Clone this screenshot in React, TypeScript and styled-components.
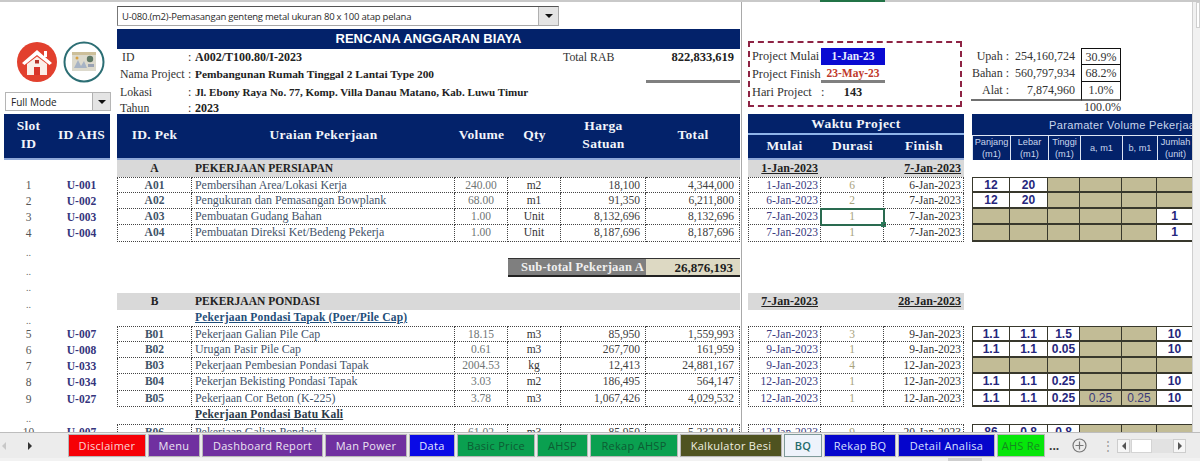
import React from "react";
import styled, { createGlobalStyle } from "styled-components";

const SERIF = `"Liberation Serif", "Times New Roman", serif`;
const SANS = `"Liberation Sans", Arial, sans-serif`;
const UI = `"Open Sans", "Noto Sans", sans-serif`;
const NAVY = "#03226a";

type Param = { v: string; khaki: boolean };
const k = (v = ""): Param => ({ v, khaki: true });
const w = (v: string): Param => ({ v, khaki: false });

type Work = {
    slot: string;
    ahs: string;
    pek: string;
    name: string;
    vol: string;
    qty: string;
    price: string;
    total: string;
    start: string;
    days: string;
    end: string;
    params: Param[];
    selected?: boolean;
};

const persiapan: Work[] = [
    { slot: "1", ahs: "U-001", pek: "A01", name: "Pembersihan Area/Lokasi Kerja", vol: "240.00", qty: "m2", price: "18,100", total: "4,344,000", start: "1-Jan-2023", days: "6", end: "6-Jan-2023", params: [w("12"), w("20"), k(), k(), k(), k()] },
    { slot: "2", ahs: "U-002", pek: "A02", name: "Pengukuran dan Pemasangan Bowplank", vol: "68.00", qty: "m1", price: "91,350", total: "6,211,800", start: "6-Jan-2023", days: "2", end: "7-Jan-2023", params: [w("12"), w("20"), k(), k(), k(), k()] },
    { slot: "3", ahs: "U-003", pek: "A03", name: "Pembuatan Gudang Bahan", vol: "1.00", qty: "Unit", price: "8,132,696", total: "8,132,696", start: "7-Jan-2023", days: "1", end: "7-Jan-2023", params: [k(), k(), k(), k(), k(), w("1")], selected: true },
    { slot: "4", ahs: "U-004", pek: "A04", name: "Pembuatan Direksi Ket/Bedeng Pekerja", vol: "1.00", qty: "Unit", price: "8,187,696", total: "8,187,696", start: "7-Jan-2023", days: "1", end: "7-Jan-2023", params: [k(), k(), k(), k(), k(), w("1")] },
];

const tapak: Work[] = [
    { slot: "5", ahs: "U-007", pek: "B01", name: "Pekerjaan Galian Pile Cap", vol: "18.15", qty: "m3", price: "85,950", total: "1,559,993", start: "7-Jan-2023", days: "3", end: "9-Jan-2023", params: [w("1.1"), w("1.1"), w("1.5"), k(), k(), w("10")] },
    { slot: "6", ahs: "U-008", pek: "B02", name: "Urugan Pasir Pile Cap", vol: "0.61", qty: "m3", price: "267,700", total: "161,959", start: "9-Jan-2023", days: "1", end: "9-Jan-2023", params: [w("1.1"), w("1.1"), w("0.05"), k(), k(), w("10")] },
    { slot: "7", ahs: "U-033", pek: "B03", name: "Pekerjaan Pembesian Pondasi Tapak", vol: "2004.53", qty: "kg", price: "12,413", total: "24,881,167", start: "9-Jan-2023", days: "4", end: "12-Jan-2023", params: [k(), k(), k(), k(), k(), k()] },
    { slot: "8", ahs: "U-034", pek: "B04", name: "Pekerjan Bekisting Pondasi Tapak", vol: "3.03", qty: "m2", price: "186,495", total: "564,147", start: "12-Jan-2023", days: "1", end: "12-Jan-2023", params: [w("1.1"), w("1.1"), w("0.25"), k(), k(), w("10")] },
    { slot: "9", ahs: "U-027", pek: "B05", name: "Pekerjaan Cor Beton (K-225)", vol: "3.78", qty: "m3", price: "1,067,426", total: "4,029,532", start: "12-Jan-2023", days: "1", end: "12-Jan-2023", params: [w("1.1"), w("1.1"), w("0.25"), k("0.25"), k("0.25"), w("10")] },
];

const batuKali: Work[] = [
    { slot: "10", ahs: "U-007", pek: "B06", name: "Pekerjaan Galian Pondasi", vol: "61.02", qty: "m3", price: "85,950", total: "5,232,924", start: "12-Jan-2023", days: "9", end: "20-Jan-2023", params: [w("86"), w("0.8"), w("0.8"), k(), k(), k()] },
];

const tabs = [
    { label: "Disclaimer", width: 76, bg: "#f60006", fg: "#fbd5d5" },
    { label: "Menu", width: 50, bg: "#7030a0", fg: "#ece4f2" },
    { label: "Dashboard Report", width: 119, bg: "#7030a0", fg: "#ece4f2" },
    { label: "Man Power", width: 80, bg: "#7030a0", fg: "#ece4f2" },
    { label: "Data", width: 44, bg: "#0a0ae6", fg: "#e4e8ff" },
    { label: "Basic Price", width: 76, bg: "#0aa050", fg: "#0d5c33" },
    { label: "AHSP", width: 49, bg: "#0aa050", fg: "#0d5c33" },
    { label: "Rekap AHSP", width: 86, bg: "#0aa050", fg: "#0d5c33" },
    { label: "Kalkulator Besi", width: 100, bg: "#4f5320", fg: "#f0f0e0" },
    { label: "BQ", width: 36, bg: "#eef3fb", fg: "#1d6b6b", active: true },
    { label: "Rekap BQ", width: 70, bg: "#0505cc", fg: "#d8e0ff" },
    { label: "Detail Analisa", width: 95, bg: "#0505cc", fg: "#d8e0ff" },
    { label: "AHS Re", width: 46, bg: "#06e60a", fg: "#148a20" },
];

const App = () => {
    const renderWork = (row: Work, index: number) => (
        <Row key={row.pek} $h={index === 3 ? 17 : 16}>
            <SlotCell>{row.slot}</SlotCell>
            <AhsCell>{row.ahs}</AhsCell>
            <span />
            <DotCell $first $top={index === 0} $align="center" $color="#3f5468" $bold>
                {row.pek}
            </DotCell>
            <NameCell $top={index === 0} $align="left" $color="#44546a">
                {row.name}
            </NameCell>
            <DotCell $top={index === 0} $align="center" $color="#6f7575">
                {row.vol}
            </DotCell>
            <DotCell $top={index === 0} $align="center" $color="#333">
                {row.qty}
            </DotCell>
            <DotCell $top={index === 0} $align="right" $color="#404040">
                {row.price}
            </DotCell>
            <DotCell $top={index === 0} $align="right" $color="#404040">
                {row.total}
            </DotCell>
            <span />
            <DotCell $first $top={index === 0} $align="right" $color="#3b3b80" $tight>
                {row.start}
            </DotCell>
            <DotCell $top={index === 0} $align="center" $color="#a8a27c" $selected={row.selected}>
                {row.days}
            </DotCell>
            <DotCell $top={index === 0} $align="right" $color="#333" $tight>
                {row.end}
            </DotCell>
            <span />
            {row.params.map((p, i) => (
                <ParamCell key={i} $khaki={p.khaki} $first={i === 0} $top={index === 0}>
                    {p.v}
                </ParamCell>
            ))}
        </Row>
    );

    return (
        <Page>
            <GlobalStyle />
            <ColumnStrip>
                <ActiveColumn />
            </ColumnStrip>
            <Workspace>
                <Sheet>
                    <FreezeLine />
                    <TopArea>
                        <LeftTools>
                            <IconRow>
                                <svg width="42" height="40" viewBox="0 0 42 40">
                                    <circle cx="21" cy="20" r="20" fill="#e2402e" />
                                    <path d="M6 21 L21 8 L36 21 L33.5 23 L21 13 L8.5 23 Z" fill="#fff" />
                                    <rect x="28" y="9" width="3" height="6" fill="#fff" />
                                    <path d="M11 22 L21 14.5 L31 22 V33 H11 Z" fill="#fbeee8" />
                                    <rect x="18" y="25" width="6" height="8" fill="#d9352a" />
                                    <rect x="19" y="18" width="4" height="3.5" fill="#b5332a" />
                                </svg>
                                <svg width="42" height="42" viewBox="0 0 42 42">
                                    <circle cx="21" cy="21" r="19.5" fill="#fff" stroke="#2c6e74" strokeWidth="2" />
                                    <rect x="9" y="11" width="24" height="19" fill="#dcd9cc" />
                                    <rect x="9" y="11" width="24" height="3" fill="#cdbf9a" />
                                    <path d="M11 27 L15 19 L18 25 L21 20 L24 27 Z" fill="#a7b3c4" />
                                    <circle cx="27" cy="18" r="3.2" fill="#5d7764" />
                                    <circle cx="14" cy="17" r="1.5" fill="#d8a040" />
                                    <rect x="25" y="23" width="6" height="3" fill="#9aa2b3" />
                                </svg>
                            </IconRow>
                            <ModeSelect>
                                <span>Full Mode</span>
                                <SelectButton $size={18}>
                                    <Caret />
                                </SelectButton>
                            </ModeSelect>
                        </LeftTools>
                        <ProjectPanel>
                            <ItemSelect>
                                <span>U-080.(m2)-Pemasangan genteng metal ukuran 80 x 100 atap pelana</span>
                                <SelectButton $size={20}>
                                    <Caret />
                                </SelectButton>
                            </ItemSelect>
                            <TitleBar>RENCANA ANGGARAN BIAYA</TitleBar>
                            <InfoRow $h={16}>
                                <InfoLabel $pad={5}>ID</InfoLabel>
                                <span>:</span>
                                <InfoValue $size={12}>A002/T100.80/I-2023</InfoValue>
                                <span>Total RAB</span>
                                <TotalValue>822,833,619</TotalValue>
                            </InfoRow>
                            <InfoRow $h={18}>
                                <InfoLabel>Nama Project</InfoLabel>
                                <span>:</span>
                                <InfoValue $size={11.4}>Pembangunan Rumah Tinggal 2 Lantai Type 200</InfoValue>
                                <span />
                                <TotalRule />
                            </InfoRow>
                            <InfoRow $h={18}>
                                <InfoLabel>Lokasi</InfoLabel>
                                <span>:</span>
                                <InfoValue $size={11.05}>Jl. Ebony Raya No. 77, Komp. Villa Danau Matano, Kab. Luwu Timur</InfoValue>
                            </InfoRow>
                            <InfoRow $h={13}>
                                <InfoLabel>Tahun</InfoLabel>
                                <span>:</span>
                                <InfoValue $size={12}>2023</InfoValue>
                            </InfoRow>
                        </ProjectPanel>
                        <ScheduleBox>
                            <span>Project Mulai :</span>
                            <StartDate>1-Jan-23</StartDate>
                            <span>Project Finish</span>
                            <FinishDate>23-May-23</FinishDate>
                            <span>Hari Project &nbsp; :</span>
                            <DayCount>143</DayCount>
                        </ScheduleBox>
                        <CostSummary>
                            <CostLabel>Upah :</CostLabel>
                            <CostValue>254,160,724</CostValue>
                            <CostPercent $first>30.9%</CostPercent>
                            <CostLabel>Bahan :</CostLabel>
                            <CostValue>560,797,934</CostValue>
                            <CostPercent>68.2%</CostPercent>
                            <CostLabel $last>Alat :</CostLabel>
                            <CostValue $last>7,874,960</CostValue>
                            <CostPercent $last>1.0%</CostPercent>
                            <CostTotal>100.0%</CostTotal>
                        </CostSummary>
                    </TopArea>

                    <HeaderRow>
                        <HeadCell $span>
                            Slot
                            <br />
                            ID
                        </HeadCell>
                        <HeadCell $span>ID AHS</HeadCell>
                        <HeadGap />
                        <HeadCell $span>ID. Pek</HeadCell>
                        <HeadCell $span>Uraian Pekerjaan</HeadCell>
                        <HeadCell $span>Volume</HeadCell>
                        <HeadCell $span>Qty</HeadCell>
                        <HeadCell $span>
                            Harga
                            <br />
                            Satuan
                        </HeadCell>
                        <HeadCell $span>Total</HeadCell>
                        <HeadGap />
                        <WaktuTitle>Waktu Project</WaktuTitle>
                        <HeadGap />
                        <ParamTitle>Paramater Volume Pekerjaan</ParamTitle>
                        <HeadCell $sub>Mulai</HeadCell>
                        <HeadCell $sub>Durasi</HeadCell>
                        <HeadCell $sub>Finish</HeadCell>
                        <ParamHead $col={15}>
                            Panjang
                            <br />
                            (m1)
                        </ParamHead>
                        <ParamHead $col={16}>
                            Lebar
                            <br />
                            (m1)
                        </ParamHead>
                        <ParamHead $col={17}>
                            Tinggi
                            <br />
                            (m1)
                        </ParamHead>
                        <ParamHead $col={18}>a, m1</ParamHead>
                        <ParamHead $col={19}>b, m1</ParamHead>
                        <ParamHead $col={20}>
                            Jumlah
                            <br />
                            (unit)
                        </ParamHead>
                    </HeaderRow>

                    <Row $h={17}>
                        <SectionRowStart />
                        <SectionCell $center>A</SectionCell>
                        <SectionCell>PEKERJAAN PERSIAPAN</SectionCell>
                        <SectionFill />
                        <span />
                        <SectionDate>1-Jan-2023</SectionDate>
                        <SectionCell />
                        <SectionDate>7-Jan-2023</SectionDate>
                    </Row>
                    {persiapan.map(renderWork)}
                    <Row $h={16}>
                        <SlotDots>..</SlotDots>
                    </Row>
                    <Row $h={19}>
                        <SlotDots>..</SlotDots>
                        <SubtotalLabel>Sub-total Pekerjaan A</SubtotalLabel>
                        <SubtotalValue>26,876,193</SubtotalValue>
                    </Row>
                    <Row $h={16}>
                        <SlotDots>..</SlotDots>
                    </Row>
                    <Row $h={17}>
                        <SlotDots>..</SlotDots>
                        <span />
                        <span />
                        <SectionCell $center>B</SectionCell>
                        <SectionCell>PEKERJAAN PONDASI</SectionCell>
                        <SectionFill />
                        <span />
                        <SectionDate>7-Jan-2023</SectionDate>
                        <SectionCell />
                        <SectionDate>28-Jan-2023</SectionDate>
                    </Row>
                    <Row $h={16}>
                        <SlotDots>..</SlotDots>
                        <SubHeading>Pekerjaan Pondasi Tapak (Poer/Pile Cap)</SubHeading>
                    </Row>
                    {tapak.map(renderWork)}
                    <Row $h={17}>
                        <SlotDots>..</SlotDots>
                        <SubHeading $dark>Pekerjaan Pondasi Batu Kali</SubHeading>
                    </Row>
                    {batuKali.map(renderWork)}
                </Sheet>
                <VScroll>
                    <VThumb />
                </VScroll>
            </Workspace>
            <TabBar>
                <TabNav>
                    <Arrow $dir="left" $color="#c8c8c8" />
                    <Arrow $dir="right" $color="#333" />
                </TabNav>
                <TabList>
                    {tabs.map((t) => (
                        <Tab key={t.label} $w={t.width} $bg={t.bg} $fg={t.fg} $active={t.active}>
                            {t.label}
                        </Tab>
                    ))}
                </TabList>
                <More>...</More>
                <AddSheet>
                    <svg width="15" height="15" viewBox="0 0 15 15">
                        <circle cx="7.5" cy="7.5" r="6.5" fill="none" stroke="#777" strokeWidth="1.2" />
                        <path d="M7.5 3.5v8M3.5 7.5h8" stroke="#777" strokeWidth="1.2" />
                    </svg>
                </AddSheet>
                <Splitter>⋮</Splitter>
                <HScroll>
                    <HButton>
                        <Arrow $dir="left" $color="#555" />
                    </HButton>
                    <HThumb />
                    <HButton $end>
                        <Arrow $dir="right" $color="#555" />
                    </HButton>
                </HScroll>
            </TabBar>
            <BottomStrip>
                <BottomThumb />
            </BottomStrip>
        </Page>
    );
};

export default App;

const GlobalStyle = createGlobalStyle`
    html, body {
        margin: 0;
        padding: 0;
        background: #fff;
    }
    * {
        box-sizing: border-box;
    }
`;

const Page = styled.div`
    width: 1200px;
    height: 461px;
    display: flex;
    flex-direction: column;
    overflow: hidden;
    font-family: ${SERIF};
    font-size: 12px;
    color: #333;
    background: #fff;
`;

const ColumnStrip = styled.div`
    height: 2px;
    flex: none;
    background: #c9c9c9;
    padding-left: 820px;
`;

const ActiveColumn = styled.div`
    width: 65px;
    height: 2px;
    background: #217346;
`;

const Workspace = styled.div`
    flex: 1;
    min-height: 0;
    display: flex;
`;

const Sheet = styled.div`
    position: relative;
    width: 1193px;
    padding-left: 4px;
    overflow: hidden;
    border-right: 1px solid #cfcfcf;
`;

const FreezeLine = styled.div`
    position: absolute;
    left: 741px;
    top: 0;
    bottom: 0;
    width: 1px;
    background: #a9a9a9;
    z-index: 3;
`;

const VScroll = styled.div`
    flex: 1;
    background: #f1f1f1;
    padding: 0 0 0 3px;
`;

const VThumb = styled.div`
    width: 4px;
    height: 26px;
    background: #fff;
    border: 1px solid #cfcfcf;
`;

const TopArea = styled.div`
    display: flex;
    height: 112px;
`;

const LeftTools = styled.div`
    width: 113px;
    flex: none;
    padding: 39px 0 0 1px;
`;

const IconRow = styled.div`
    display: flex;
    align-items: center;
    gap: 5px;
    padding-left: 11px;
    height: 42px;
`;

const ModeSelect = styled.div`
    display: flex;
    align-items: center;
    justify-content: space-between;
    width: 106px;
    height: 19px;
    margin-top: 9px;
    padding-left: 5px;
    border: 1px solid #b5b5b5;
    background: #fff;
    font: 10px ${UI};
    color: #222;
`;

const SelectButton = styled.div<{ $size: number }>`
    width: ${(p) => p.$size}px;
    height: 100%;
    flex: none;
    display: flex;
    align-items: center;
    justify-content: center;
    background: #e4e4e4;
    border-left: 1px solid #b0b0b0;
`;

const Caret = styled.div`
    width: 0;
    height: 0;
    border-left: 4px solid transparent;
    border-right: 4px solid transparent;
    border-top: 4px solid #111;
`;

const ProjectPanel = styled.div`
    width: 623px;
    flex: none;
    padding-top: 4px;
`;

const ItemSelect = styled.div`
    display: flex;
    align-items: center;
    justify-content: space-between;
    width: 442px;
    height: 20px;
    padding-left: 4px;
    border: 1px solid #a8a8a8;
    border-top-color: #555;
    border-left-color: #777;
    font: 9.5px ${UI};
    letter-spacing: -0.22px;
    color: #2a2a2a;
`;

const TitleBar = styled.div`
    height: 20px;
    margin-top: 3px;
    background: ${NAVY};
    color: #fff;
    font: bold 13px/20px ${SANS};
    text-align: center;
`;

const InfoRow = styled.div<{ $h: number }>`
    display: grid;
    grid-template-columns: 71px 7px 368px 83px 94px;
    align-items: center;
    height: ${(p) => p.$h}px;
    font-size: 11.8px;
    white-space: nowrap;
    color: #333;
`;

const InfoLabel = styled.span<{ $pad?: number }>`
    padding-left: ${(p) => p.$pad ?? 3}px;
`;

const InfoValue = styled.span<{ $size: number }>`
    font-weight: bold;
    font-size: ${(p) => p.$size}px;
    color: #222;
`;

const TotalValue = styled.span`
    font-weight: bold;
    font-size: 12.5px;
    text-align: right;
    padding-right: 6px;
    color: #222;
`;

const TotalRule = styled.div`
    height: 3px;
    background: #808080;
    align-self: end;
`;

const ScheduleBox = styled.div`
    flex: none;
    width: 214px;
    height: 66px;
    margin: 39px 0 0 8px;
    padding: 5px 0 0 2px;
    border: 2px dashed #8e2344;
    display: grid;
    grid-template-columns: 69px 64px;
    grid-template-rows: 17px 18px 18px;
    align-items: center;
    white-space: nowrap;
    font-size: 12.3px;
`;

const StartDate = styled.div`
    height: 17px;
    background: #0a0ad2;
    color: #e8ecff;
    font: bold 11.5px/17px ${SERIF};
    text-align: center;
`;

const FinishDate = styled.div`
    height: 18px;
    border-bottom: 3px solid #808080;
    color: #c0392b;
    font: bold 11.5px/16px ${SERIF};
    text-align: center;
`;

const DayCount = styled.div`
    font-weight: bold;
    text-align: center;
    color: #222;
`;

const CostSummary = styled.div`
    flex: none;
    width: 150px;
    margin: 46px 0 0 9px;
    display: grid;
    grid-template-columns: 38px 66px 6px 40px;
    grid-template-rows: 17px 17px 19px 13px;
    align-items: center;
    white-space: nowrap;
`;

const CostLabel = styled.div<{ $last?: boolean }>`
    grid-column: 1;
    height: 100%;
    line-height: 17px;
    text-align: right;
    border-bottom: ${(p) => (p.$last ? "2px solid #707070" : "none")};
`;

const CostValue = styled.div<{ $last?: boolean }>`
    grid-column: 2 / 4;
    height: 100%;
    line-height: 17px;
    padding-right: 6px;
    text-align: right;
    border-bottom: ${(p) => (p.$last ? "2px solid #707070" : "none")};
`;

const CostPercent = styled.div<{ $first?: boolean; $last?: boolean }>`
    grid-column: 4;
    height: 100%;
    line-height: 16px;
    text-align: center;
    border: 1px solid #111;
    border-top-width: ${(p) => (p.$first ? 1 : 0)}px;
    border-bottom: ${(p) => (p.$last ? "2px solid #707070" : "1px solid #111")};
`;

const CostTotal = styled.div`
    grid-column: 3 / 5;
    text-align: right;
    justify-self: end;
`;

const COLUMNS = "49px 57px 7px 75px 263px 53px 53px 85px 94px 8px 73px 63px 80px 8px 38px 38px 32px 42px 35px 36px";

const HeaderRow = styled.div`
    display: grid;
    grid-template-columns: ${COLUMNS};
    grid-template-rows: 21px 23px;
    height: 46px;
`;

const HeadCell = styled.div<{ $span?: boolean; $sub?: boolean }>`
    grid-row: ${(p) => (p.$span ? "1 / 3" : "2")};
    background: ${NAVY};
    color: #f2f5fb;
    display: flex;
    align-items: center;
    justify-content: center;
    text-align: center;
    height: ${(p) => (p.$span ? "46px" : "25px")};
    padding-bottom: 2px;
    border-bottom: 2px solid #8fa8d8;
    font: bold 13.5px/18px ${SERIF};
    letter-spacing: 0.3px;
    white-space: nowrap;
`;

const HeadGap = styled.span`
    grid-row: 1 / 3;
`;

const WaktuTitle = styled.div`
    grid-column: 11 / 14;
    grid-row: 1;
    background: ${NAVY};
    color: #f2f5fb;
    font: bold 13.5px/20px ${SERIF};
    letter-spacing: 0.4px;
    text-align: center;
    border-bottom: 2px solid #8fb4e8;
`;

const ParamTitle = styled.div`
    grid-column: 15 / 21;
    grid-row: 1;
    background: ${NAVY};
    color: #c9d6ee;
    font: 11px/22px ${SANS};
    letter-spacing: 0.35px;
    padding-left: 77px;
    white-space: nowrap;
    overflow: hidden;
`;

const ParamHead = styled.div<{ $col: number }>`
    grid-column: ${(p) => p.$col};
    grid-row: 2;
    height: 25px;
    background: ${NAVY};
    color: #c9d6ee;
    border-left: 1px solid #dfe6f3;
    border-top: 1px solid #dfe6f3;
    display: flex;
    align-items: center;
    justify-content: center;
    text-align: center;
    font: 9.2px/12.5px ${SANS};
    white-space: nowrap;
    overflow: hidden;
`;

const Row = styled.div<{ $h: number }>`
    display: grid;
    grid-template-columns: ${COLUMNS};
    grid-template-rows: ${(p) => p.$h}px;
    height: ${(p) => p.$h}px;
    font-size: 11.5px;
    white-space: nowrap;
`;

const SectionRowStart = styled.span`
    grid-column: 1 / 4;
`;

const SlotCell = styled.div`
    text-align: center;
    line-height: 16px;
    color: #555;
`;

const SlotDots = styled.div`
    grid-column: 1;
    align-self: end;
    text-align: center;
    line-height: 10px;
    font-size: 10px;
    color: #666;
`;

const AhsCell = styled.div`
    text-align: center;
    line-height: 16px;
    font-weight: bold;
    color: #34347c;
`;

const DotCell = styled.div<{
    $first?: boolean;
    $top?: boolean;
    $align: string;
    $color: string;
    $bold?: boolean;
    $selected?: boolean;
    $tight?: boolean;
}>`
    position: relative;
    padding: 0 ${(p) => (p.$tight ? 2 : p.$align === "right" ? 5 : 3)}px 0 3px;
    text-align: ${(p) => p.$align};
    color: ${(p) => p.$color};
    font-weight: ${(p) => (p.$bold ? "bold" : "normal")};
    line-height: 15px;
    border-right: 1px dotted #444;
    border-bottom: 1px dotted #444;
    border-left: ${(p) => (p.$first ? "1px dotted #444" : "none")};
    border-top: ${(p) => (p.$top ? "1px dotted #444" : "none")};
    outline: ${(p) => (p.$selected ? "2px solid #2a6b50" : "none")};
    outline-offset: -1px;

    &::after {
        content: "";
        display: ${(p) => (p.$selected ? "block" : "none")};
        position: absolute;
        right: -3px;
        bottom: -3px;
        width: 5px;
        height: 5px;
        background: #2a7b5a;
    }
`;

const NameCell = styled(DotCell)`
    font-size: 11.9px;
`;

const ParamCell = styled.div<{ $khaki: boolean; $first?: boolean; $top?: boolean }>`
    background: ${(p) => (p.$khaki ? "#c2bc96" : "#fff")};
    color: ${(p) => (p.$khaki ? "#3a3a7a" : "#26267c")};
    font: ${(p) => (p.$khaki ? "normal" : "bold")} 12px/14px ${SANS};
    text-align: center;
    border-right: 1px solid #38382c;
    border-bottom: 2px solid #38382c;
    border-left: ${(p) => (p.$first ? "1px solid #38382c" : "none")};
    border-top: ${(p) => (p.$top ? "1px solid #38382c" : "none")};
`;

const SectionCell = styled.div<{ $center?: boolean }>`
    background: #d9d9d9;
    padding-left: ${(p) => (p.$center ? 0 : 3)}px;
    text-align: ${(p) => (p.$center ? "center" : "left")};
    font-weight: bold;
    line-height: 17px;
    color: #222;
`;

const SectionFill = styled(SectionCell)`
    grid-column: 6 / 10;
`;

const SectionDate = styled(SectionCell)`
    text-align: right;
    padding: 0 3px 0 0;
    font-size: 12px;
    text-decoration: underline;
    color: #222;
`;

const SubtotalLabel = styled.div`
    grid-column: 7 / 9;
    background: #7f7f7f;
    color: #f0f0f0;
    font: bold 12.5px/17px ${SERIF};
    letter-spacing: 0.2px;
    text-align: right;
    padding-right: 2px;
    border-top: 1px solid #333;
    border-bottom: 2px solid #222;
`;

const SubtotalValue = styled.div`
    grid-column: 9;
    background: #ddd9c3;
    color: #1d1d1d;
    font: bold 13px/17px ${SERIF};
    text-align: right;
    padding-right: 7px;
    border-top: 1px solid #333;
    border-bottom: 2px solid #222;
`;

const SubHeading = styled.div<{ $dark?: boolean }>`
    grid-column: 5;
    padding-left: 3px;
    font-weight: bold;
    font-size: 11.5px;
    line-height: 15px;
    letter-spacing: 0.2px;
    text-decoration: underline;
    color: ${(p) => (p.$dark ? "#2a3a48" : "#1f4e79")};
`;

const TabBar = styled.div`
    flex: none;
    height: 26px;
    display: flex;
    align-items: center;
    background: #ececec;
    border-top: 1px solid #bdbdbd;
`;

const TabNav = styled.div`
    width: 69px;
    flex: none;
    display: flex;
    align-items: center;
    gap: 22px;
    padding-left: 2px;
`;

const Arrow = styled.div<{ $dir: "left" | "right"; $color: string }>`
    width: 0;
    height: 0;
    border-top: 4px solid transparent;
    border-bottom: 4px solid transparent;
    border-left: ${(p) => (p.$dir === "right" ? `4px solid ${p.$color}` : "none")};
    border-right: ${(p) => (p.$dir === "left" ? `4px solid ${p.$color}` : "none")};
`;

const TabList = styled.div`
    display: flex;
    gap: 4px;
    width: 975px;
    flex: none;
`;

const Tab = styled.div<{ $w: number; $bg: string; $fg: string; $active?: boolean }>`
    width: ${(p) => p.$w}px;
    height: 21px;
    flex: none;
    overflow: hidden;
    white-space: nowrap;
    text-align: center;
    background: ${(p) => p.$bg};
    color: ${(p) => p.$fg};
    font: ${(p) => (p.$active ? 600 : 400)} 11px/21px ${UI};
    letter-spacing: 0.3px;
    box-shadow: 0 0 0 1px ${(p) => (p.$active ? "#7f9a9a" : "rgba(0, 0, 0, 0.22)")};
`;

const More = styled.div`
    width: 14px;
    margin-left: 5px;
    flex: none;
    font: bold 12px/12px ${UI};
    color: #333;
`;

const AddSheet = styled.div`
    width: 15px;
    height: 15px;
    margin-left: 9px;
    flex: none;
    display: flex;
`;

const Splitter = styled.div`
    width: 8px;
    margin-left: 15px;
    flex: none;
    color: #999;
    font: 12px/12px ${UI};
`;

const HScroll = styled.div`
    width: 69px;
    height: 14px;
    margin-left: 7px;
    flex: none;
    display: flex;
    align-items: center;
    background: #e2e2e2;
`;

const HButton = styled.div<{ $end?: boolean }>`
    width: 13px;
    height: 14px;
    margin-left: ${(p) => (p.$end ? "auto" : 0)};
    display: flex;
    align-items: center;
    justify-content: center;
    background: #f6f6f6;
    border: 1px solid #cdcdcd;
`;

const HThumb = styled.div`
    width: 21px;
    height: 14px;
    margin-left: 1px;
    background: #fff;
    border: 1px solid #d4d4d4;
`;

const BottomStrip = styled.div`
    height: 3px;
    flex: none;
    background: #f2f2f2;
    padding-left: 948px;
`;

const BottomThumb = styled.div`
    width: 34px;
    height: 3px;
    background: #cfcfcf;
`;
